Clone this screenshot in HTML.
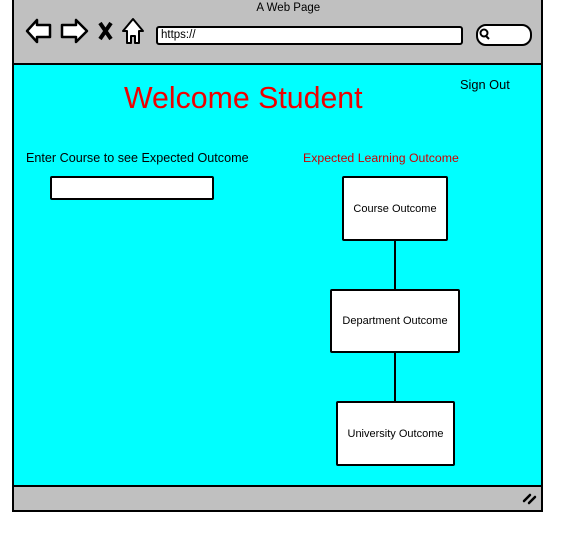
<!DOCTYPE html><html><head><style>
body{margin:0;width:567px;height:542px;background:#fff;position:relative;font-family:"Liberation Sans",sans-serif;overflow:hidden}
.a{position:absolute}
.box{position:absolute;background:#fff;border:2px solid #000;border-radius:2px;font-size:11px;display:flex;align-items:center;justify-content:center;box-sizing:border-box}
</style></head><body>
<div class="a" style="left:12px;top:-3px;width:527px;height:511px;border:2px solid #000;background:#c0c0c0"></div>
<div class="a" style="left:14px;top:63px;width:527px;height:2px;background:#000"></div>
<div class="a" style="left:14px;top:65px;width:527px;height:421px;background:#00ffff"></div>
<div class="a" style="left:14px;top:485px;width:527px;height:2px;background:#000"></div>
<div class="a" style="left:0;top:2px;width:567px;text-align:center;font-size:11.5px">&nbsp;&nbsp;&nbsp;A Web Page</div>
<svg class="a" style="left:24px;top:16px" width="130" height="30" viewBox="0 0 130 30">
<path d="M3 15 L13 4 L13 9 L26 9 L26 21 L13 21 L13 26 Z" fill="#fff" stroke="#000" stroke-width="2.5" stroke-linejoin="round"/>
<path d="M63 15 L52 4 L52 9 L38 9 L38 21 L52 21 L52 26 Z" fill="#fff" stroke="#000" stroke-width="2.5" stroke-linejoin="round"/>
<path d="M76 7 L87 23 M87 7 L76 23" stroke="#000" stroke-width="4"/>
<path d="M109 3 L99 15 L103 15 L103 27 L107 27 L107 20 L111 20 L111 27 L115 27 L115 15 L119 15 Z" fill="#fff" stroke="#000" stroke-width="2" stroke-linejoin="round"/>
</svg>
<div class="a" style="left:156px;top:26px;width:300px;height:15px;border:2px solid #000;border-radius:3px;background:#fff;font-size:11.5px;line-height:14px;padding-left:3px">https://</div>
<div class="a" style="left:476px;top:24px;width:52px;height:18px;border:2px solid #000;border-radius:10px;background:#fff"></div>
<svg class="a" style="left:478px;top:28px" width="14" height="12"><circle cx="6" cy="5" r="3.5" fill="none" stroke="#000" stroke-width="2"/><path d="M8 8 L11 11" stroke="#000" stroke-width="2"/></svg>
<div class="a" style="left:124px;top:82px;font-size:30.3px;color:#e00">Welcome Student</div>
<div class="a" style="left:460px;top:77px;font-size:12.8px">Sign Out</div>
<div class="a" style="left:26px;top:151px;font-size:12.6px">Enter Course to see Expected Outcome</div>
<div class="a" style="left:303px;top:151px;font-size:12.3px;color:#c00">Expected Learning Outcome</div>
<div class="box" style="left:50px;top:176px;width:164px;height:24px"></div>
<div class="a" style="left:394px;top:240px;width:2px;height:50px;background:#000"></div>
<div class="a" style="left:394px;top:352px;width:2px;height:50px;background:#000"></div>
<div class="box" style="left:342px;top:176px;width:106px;height:65px">Course Outcome</div>
<div class="box" style="left:330px;top:289px;width:130px;height:64px">Department Outcome</div>
<div class="box" style="left:336px;top:401px;width:119px;height:65px">University Outcome</div>
<svg class="a" style="left:522px;top:491px" width="16" height="14"><path d="M2 10 L8 4 M7 12 L13 6" stroke="#000" stroke-width="2.5" stroke-linecap="round"/></svg>
</body></html>
